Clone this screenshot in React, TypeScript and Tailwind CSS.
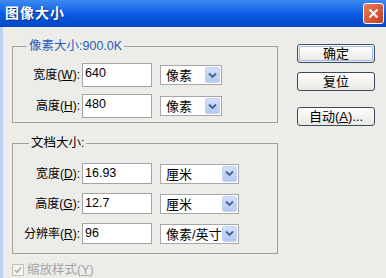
import React from "react";

const font = { fontFamily: '"Liberation Sans", "Noto Sans CJK SC", sans-serif' };

function Chevron() {
  return (
    <svg width="9" height="7" viewBox="0 0 9 7">
      <path d="M1 1.5 L4.5 5 L8 1.5" fill="none" stroke="#4a5f8c" strokeWidth="1.8" />
    </svg>
  );
}

function Select({ value, w }: { value: string; w: string }) {
  return (
    <div className={`${w} h-[20px] flex items-stretch border border-[#a7a7a7] bg-white p-[1px]`}>
      <div className="flex-1 pl-[4px] text-[13px] leading-[18px] text-black">{value}</div>
      <div className="w-[15px] flex items-center justify-center rounded-[2px] bg-gradient-to-b from-[#d3e0fa] to-[#b3c9f2] border border-[#c3d3f3]">
        <Chevron />
      </div>
    </div>
  );
}

function Input({ value, h }: { value: string; h: string }) {
  return (
    <div className={`w-[70px] ${h} border border-[#a3a3a3] bg-white pl-[2px] text-[12.5px] leading-[18px] text-black`}>
      {value}
    </div>
  );
}

function Row({ label, u, value, unit, h, sw }: { label: string; u: string; value: string; unit: string; h: string; sw: string }) {
  const i = label.indexOf(u);
  return (
    <div className="flex items-center">
      <div className="w-[69px] pr-[2px] text-right text-[12px] text-black whitespace-nowrap">
        {label.slice(0, i)}(<span className="underline">{u}</span>):
      </div>
      <Input value={value} h={h} />
      <div className="ml-[8px]">
        <Select value={unit} w={sw} />
      </div>
    </div>
  );
}

function Btn({ children, def }: { children: React.ReactNode; def?: boolean }) {
  return (
    <div className="w-[78px] h-[19px] rounded-[3px] border border-[#3c4a5c] bg-gradient-to-b from-[#ffffff] to-[#e8e8e4] p-[1px]">
      <div
        className={`h-full rounded-[2px] flex items-center justify-center text-[13px] text-black ${
          def ? "border border-[#9bbbf0]" : ""
        }`}
      >
        {children}
      </div>
    </div>
  );
}

export default function App() {
  return (
    <div className="w-[386px] h-[278px] overflow-hidden flex flex-col bg-[#ecece9]" style={font}>
      <div className="h-[27px] shrink-0 flex items-center justify-between pl-[5px] pr-[2px] bg-gradient-to-b from-[#3d8af2] via-[#0a5ce4] to-[#0347c6]">
        <div className="text-white font-bold text-[14px] tracking-[1px] [text-shadow:1px_1px_0_#0a2a80]">图像大小</div>
        <div className="w-[21px] h-[21px] rounded-[3px] border border-white bg-gradient-to-br from-[#e97b5a] to-[#c43d1c] flex items-center justify-center">
          <svg width="11" height="11" viewBox="0 0 11 11">
            <path d="M1.5 1.5 L9.5 9.5 M9.5 1.5 L1.5 9.5" stroke="white" strokeWidth="2" />
          </svg>
        </div>
      </div>
      <div className="flex-1 flex border-l-[3px] border-[#bcd0f2] pl-[9px]">
        <div className="w-[266px] flex flex-col">
          <div className="relative mt-[19px] h-[77px] border border-[#a0a0a0] pt-[16px] pb-[4px] flex flex-col gap-[7px]">
            <span className="absolute left-[14px] top-[-9px] px-[2px] bg-[#ecece9] text-[12.5px] leading-[16px] text-[#2a5ab8]">
              像素大小:900.0K
            </span>
            <Row label="宽度W" u="W" value="640" unit="像素" h="h-[24px]" sw="w-[62px]" />
            <Row label="高度H" u="H" value="480" unit="像素" h="h-[24px]" sw="w-[62px]" />
          </div>
          <div className="relative mt-[20px] h-[111px] border border-[#a0a0a0] pt-[19px] flex flex-col gap-[9px]">
            <span className="absolute left-[16px] top-[-9px] px-[2px] bg-[#ecece9] text-[12.5px] leading-[16px] text-black">
              文档大小:
            </span>
            <Row label="宽度D" u="D" value="16.93" unit="厘米" h="h-[21px]" sw="w-[79px]" />
            <Row label="高度G" u="G" value="12.7" unit="厘米" h="h-[21px]" sw="w-[79px]" />
            <Row label="分辨率R" u="R" value="96" unit="像素/英寸" h="h-[21px]" sw="w-[79px]" />
          </div>
          <div className="mt-[9px] flex items-center gap-[3px]">
            <div className="w-[12px] h-[12px] border border-[#c0c0bc] bg-[#f4f4f0] flex items-center justify-center">
              <svg width="8" height="8" viewBox="0 0 8 8">
                <path d="M1 4 L3 6.2 L7 1.5" fill="none" stroke="#a8a8a4" strokeWidth="1.6" />
              </svg>
            </div>
            <span className="text-[12.5px] leading-[14px] text-[#a4a4a0]">
              缩放样式(<span className="underline">Y</span>)
            </span>
          </div>
        </div>
        <div className="ml-[19px] mt-[17px] flex flex-col">
          <Btn def>确定</Btn>
          <div className="mt-[9px]">
            <Btn>复位</Btn>
          </div>
          <div className="mt-[16px]">
            <Btn>
              自动(<span className="underline">A</span>)...
            </Btn>
          </div>
        </div>
      </div>
    </div>
  );
}
